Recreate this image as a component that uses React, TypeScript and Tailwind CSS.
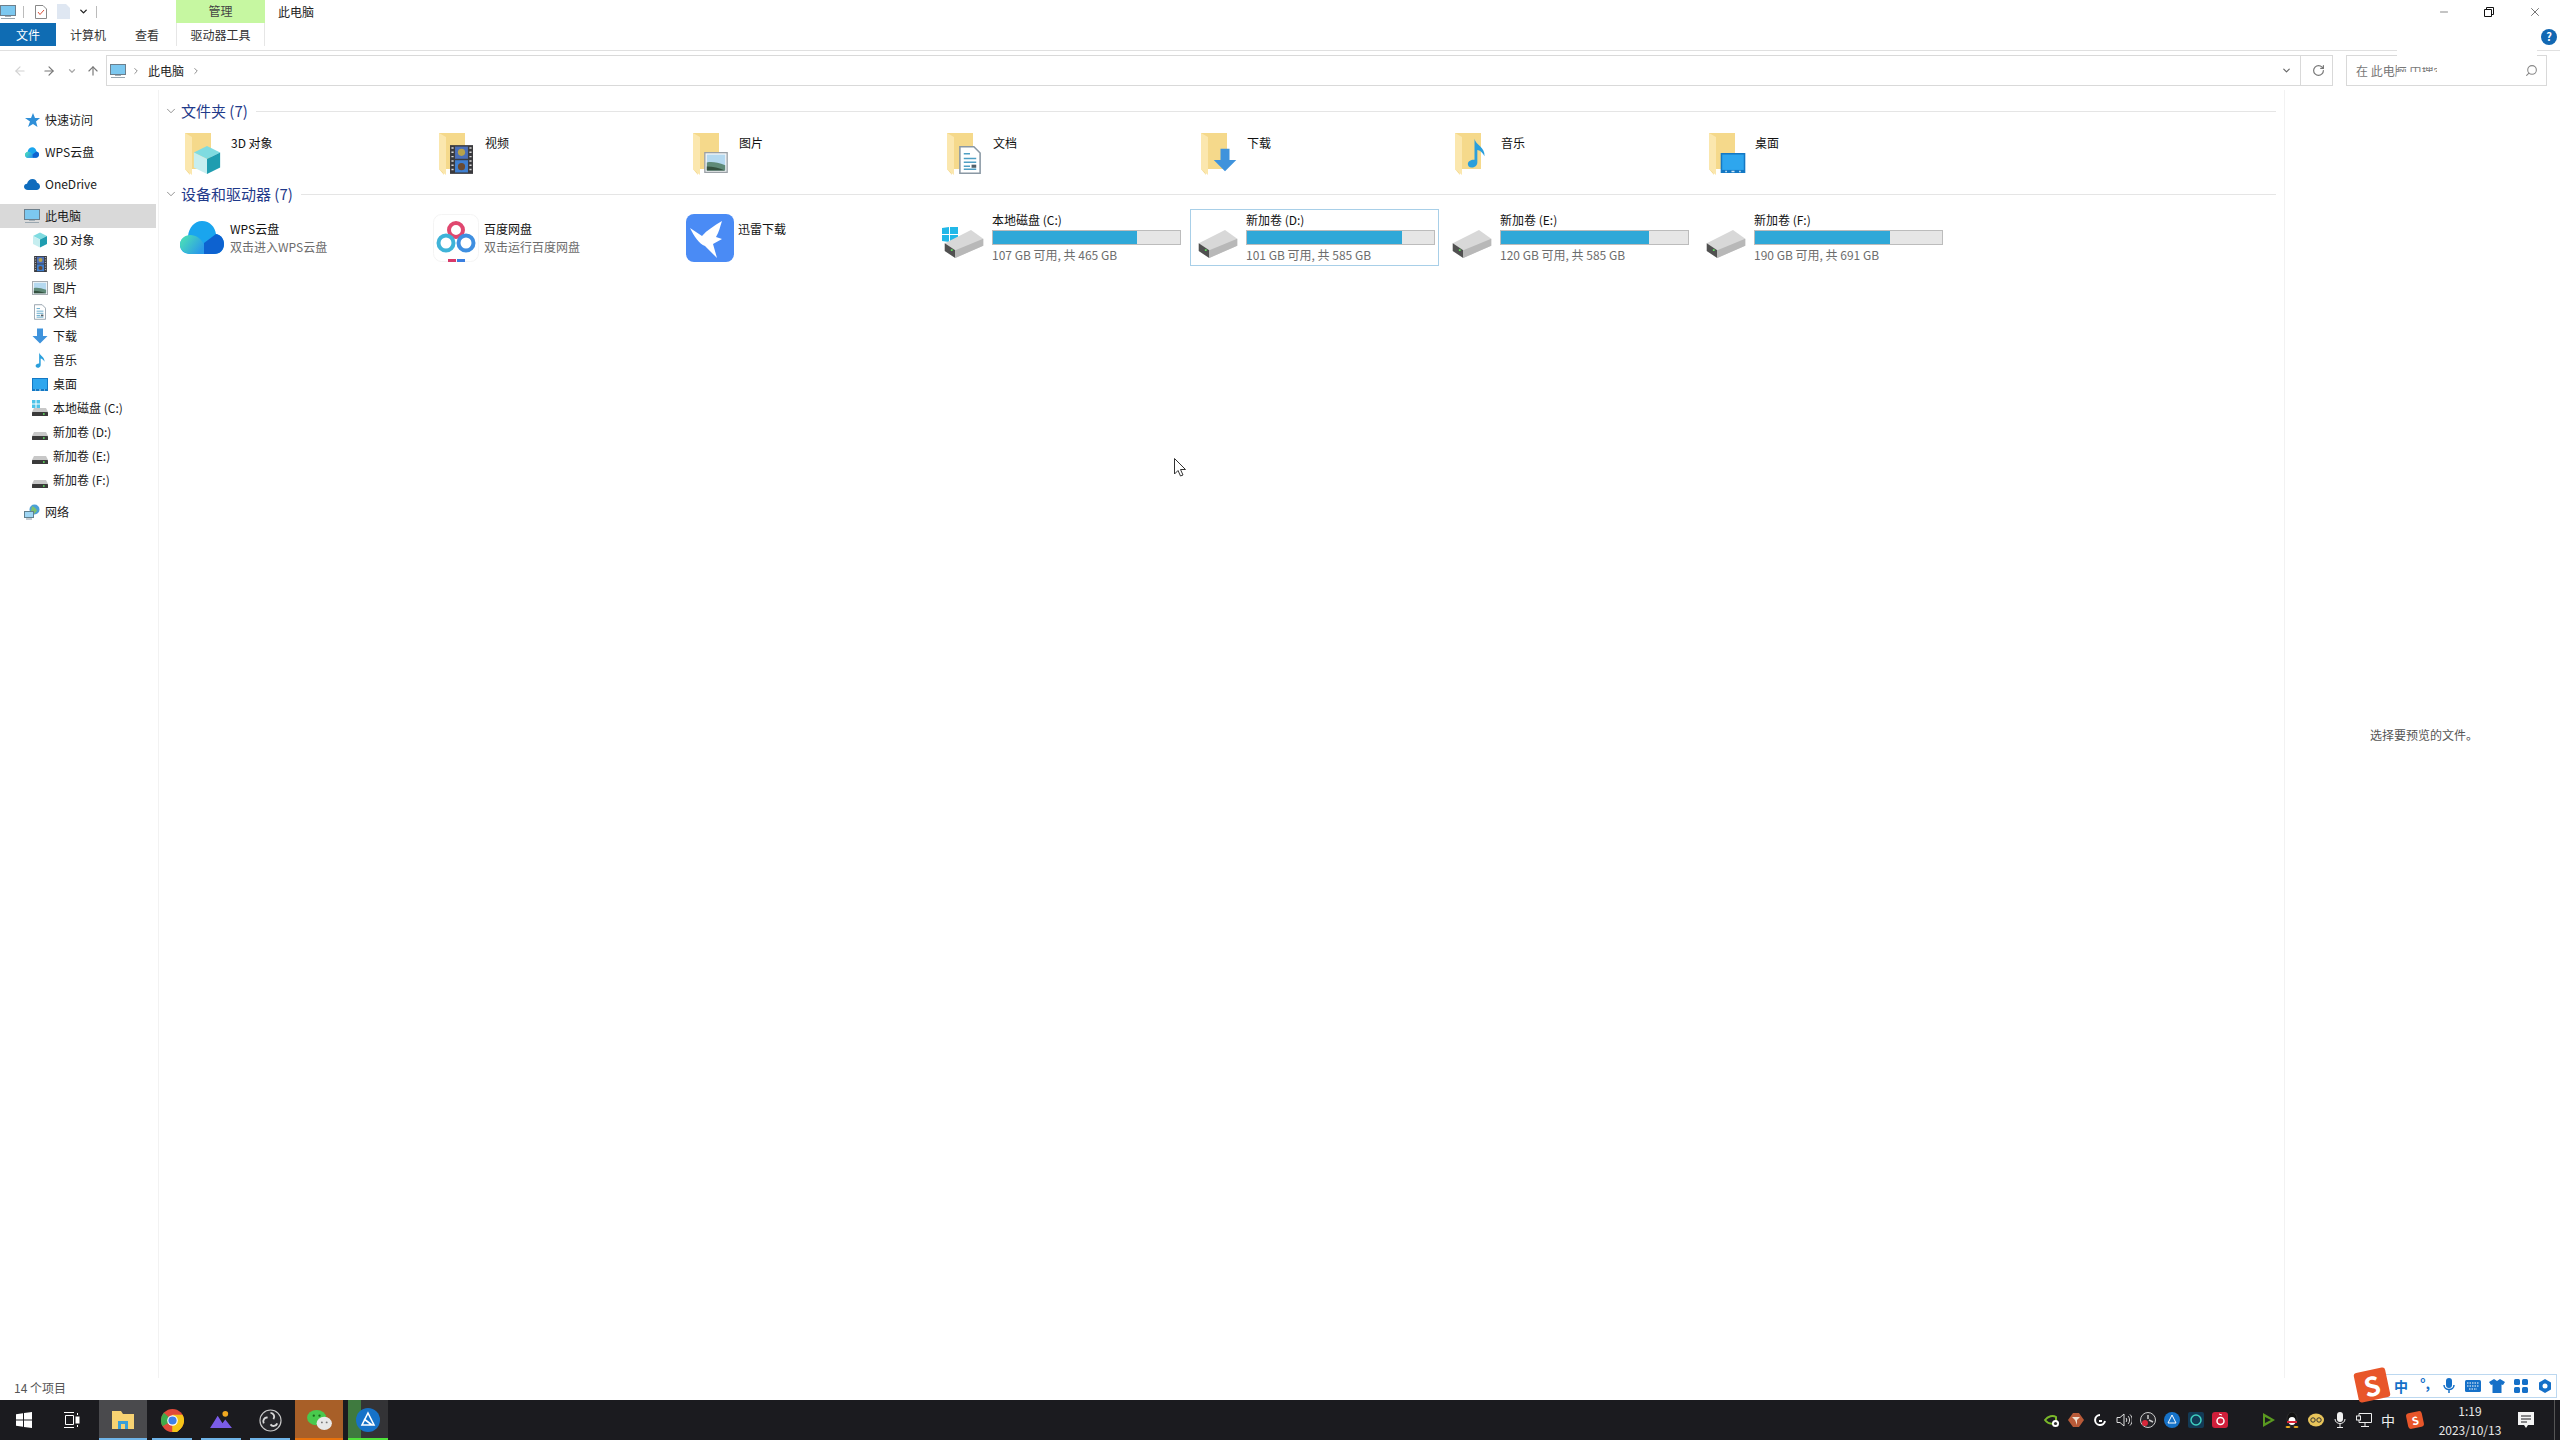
import type { ReactNode } from "react";
import { ArrowLeft, ArrowRight, ArrowUp, ChevronDown, ChevronRight, Minus, RotateCw, Search, X } from "lucide-react";

const FONT = "font-['Noto_Sans_CJK_SC','Noto_Sans',sans-serif]";

function Desktop({ className = "" }: { className?: string }) {
  return (
    <svg viewBox="0 0 16 16" className={className}>
      <rect x="0.5" y="1.5" width="15" height="10" fill="#8fd3f4" stroke="#6d7f8c" />
      <rect x="1" y="2" width="14" height="9" fill="#7cc8f0" />
      <rect x="5" y="12" width="6" height="1" fill="#a4b0b8" />
      <rect x="1" y="14" width="14" height="1" fill="#9aa7b0" />
    </svg>
  );
}

function Cube({ className = "" }: { className?: string }) {
  return (
    <svg viewBox="0 0 16 16" className={className}>
      <path d="M8 0.5 15 4 8 7.5 1 4Z" fill="#7fdbe0" />
      <path d="M1 4 8 7.5V15.5L1 12Z" fill="#c6eef0" />
      <path d="M15 4 8 7.5V15.5L15 12Z" fill="#1f9db0" />
    </svg>
  );
}

function Film({ className = "" }: { className?: string }) {
  return (
    <svg viewBox="0 0 16 20" className={className}>
      <rect width="16" height="20" fill="#3a3a3e" />
      <rect x="3.5" y="1" width="9" height="8.5" fill="#4b6fb8" />
      <rect x="3.5" y="10.5" width="9" height="8.5" fill="#3f7fd0" />
      <circle cx="8" cy="5" r="2.5" fill="#b8a24a" />
      <circle cx="8" cy="15" r="2.5" fill="#6a4a30" />
      <path d="M1 2h1.5M1 5h1.5M1 8h1.5M1 11h1.5M1 14h1.5M1 17h1.5M13.5 2H15M13.5 5H15M13.5 8H15M13.5 11H15M13.5 14H15M13.5 17H15" stroke="#d8d8d8" />
    </svg>
  );
}

function Picture({ className = "" }: { className?: string }) {
  return (
    <svg viewBox="0 0 18 16" className={className}>
      <rect x="0.5" y="0.5" width="17" height="15" fill="#f4f6f8" stroke="#9aa0a6" />
      <rect x="2" y="2" width="14" height="12" fill="#b5d9f0" />
      <path d="M2 8c4-1 8 0 14 2v4H2Z" fill="#5f8a78" />
      <path d="M2 11c5 0 9 1 14 3H2Z" fill="#34503f" />
    </svg>
  );
}

function Doc({ className = "" }: { className?: string }) {
  return (
    <svg viewBox="0 0 14 18" className={className}>
      <path d="M0.5 0.5H9.5L13.5 4.5V17.5H0.5Z" fill="#fff" stroke="#8a98a4" />
      <path d="M3 5H7M3 8H11M3 10.5H11M3 13H7M3 15H11" stroke="#4f9fc4" />
      <rect x="8" y="12" width="3" height="2" fill="#50606a" />
    </svg>
  );
}

function Download({ className = "" }: { className?: string }) {
  return (
    <svg viewBox="0 0 16 16" className={className}>
      <path d="M5 0.5H11V8H15.5L8 15.5 0.5 8H5Z" fill="#3f93dc" />
    </svg>
  );
}

function Note({ className = "" }: { className?: string }) {
  return (
    <svg viewBox="0 0 12 18" className={className}>
      <path d="M4.5 0.5C5 4 11 5.5 10.5 11 9.5 8.5 7.5 7.5 6.2 7.2V14.5C6.2 16.5 4.5 17.7 2.8 17.7 1.3 17.7 0.5 16.7 0.5 15.6 0.5 13.9 2.5 12.8 4.5 13Z" fill="#2a9fdc" />
    </svg>
  );
}

function DesktopBlue({ className = "" }: { className?: string }) {
  return (
    <svg viewBox="0 0 16 13" className={className}>
      <rect width="16" height="13" fill="#1378c4" />
      <rect x="1" y="1" width="14" height="10" fill="#2ea6ee" />
      <path d="M3 12h1M7 12h2M12 12h1" stroke="#cfe8f8" />
    </svg>
  );
}

function SmallDrive({ win = false }: { win?: boolean }) {
  return (
    <span className="relative block w-4 h-4 shrink-0">
      {win && (
        <svg viewBox="0 0 8 8" className="absolute left-0 top-0 w-[8px] h-[8px]">
          <path d="M0 0h3.5v3.5H0ZM4.5 0H8v3.5H4.5ZM0 4.5h3.5V8H0ZM4.5 4.5H8V8H4.5Z" fill="#4fc3e8" />
        </svg>
      )}
      <svg viewBox="0 0 16 8" className="absolute left-0 bottom-0 w-4 h-2">
        <path d="M2 0H14L16 4H0Z" fill="#c8c8c8" />
        <rect y="4" width="16" height="4" rx="0.5" fill="#3a3a3a" />
        <rect x="11" y="5.2" width="1.6" height="1.6" fill="#5ee05e" />
      </svg>
    </span>
  );
}

function Network() {
  return (
    <svg viewBox="0 0 16 16" className="w-4 h-4 shrink-0">
      <circle cx="10.5" cy="5.5" r="5" fill="#4a9fd8" />
      <path d="M8 2c2 1 4 2 5 5l-3 3-3-3Z" fill="#7dc06e" />
      <rect x="0.5" y="7.5" width="9" height="6" fill="#9fd6f4" stroke="#60808f" />
      <rect x="2" y="14.5" width="6" height="1" fill="#8a98a4" />
    </svg>
  );
}

function OneDriveIcon() {
  return (
    <svg viewBox="0 0 16 11" className="w-4 h-[11px] shrink-0">
      <path d="M4 11C1.5 11 0 9.5 0 7.8 0 6 1.5 4.8 3 4.8 3.8 2 6 0 8.5 0 11 0 12.6 1.5 13 3.8 14.8 4.2 16 5.6 16 7.5 16 9.5 14.5 11 12.5 11Z" fill="#0f6cbd" />
    </svg>
  );
}

function WpsCloud({ className = "" }: { className?: string }) {
  return (
    <svg viewBox="0 0 44 33" className={className}>
      <defs>
        <linearGradient id="wa" x1="0" y1="0" x2="1" y2="0.6">
          <stop offset="0" stopColor="#4fe8b0" />
          <stop offset="1" stopColor="#2b9be8" />
        </linearGradient>
      </defs>
      <path d="M34 33H10C4 33 0 29 0 24 0 19 3.5 15.5 8 15 9 7 14 0 22 0 30 0 35 6 36 13 41 14 44 18 44 23 44 29 40 33 34 33Z" fill="#1aa5ee" />
      <path d="M12 33C5 33 0 29 0 24 0 18 5 14 10 14 16 14 22 18 24 24L24 33Z" fill="url(#wa)" />
      <path d="M24 33V22L36 13C41 14 44 18 44 23 44 29 40 33 34 33Z" fill="#0d62d0" />
    </svg>
  );
}

function Baidu({ className = "" }: { className?: string }) {
  return (
    <svg viewBox="0 0 46 48" className={className}>
      <rect x="0.5" y="0.5" width="45" height="47" rx="8" fill="#fff" stroke="#f4f4f4" />
      <circle cx="23" cy="16" r="7" fill="none" stroke="#e0476f" strokeWidth="4" />
      <circle cx="13" cy="29" r="7.5" fill="none" stroke="#3fb3d8" strokeWidth="4" />
      <circle cx="33" cy="29" r="7.5" fill="none" stroke="#3f8fe0" strokeWidth="4" />
      <rect x="15" y="45" width="8" height="3" fill="#d83a6a" />
      <rect x="24" y="45" width="8" height="3" fill="#3a7fe0" />
    </svg>
  );
}

function Xunlei({ className = "" }: { className?: string }) {
  return (
    <svg viewBox="0 0 48 48" className={className}>
      <rect width="48" height="48" rx="8" fill="#4a8bf5" />
      <path d="M4 14 16 22C21 16 28 12 36 7 34 13 33 18 30 23L36 25 27 30 31 44 19 32C13 30 8 22 4 14Z" fill="#fff" />
    </svg>
  );
}

function Folder({ children }: { children?: ReactNode }) {
  return (
    <span className="relative block w-[44px] h-[42px] shrink-0">
      <svg viewBox="0 0 26 42" className="absolute left-0 top-0 w-[26px] h-[42px]">
        <path d="M0 0H26V36L4 36 5 42 0 36Z" fill="#f5d98b" />
        <path d="M0 0 7 4V42L0 36Z" fill="#fbe7ae" />
      </svg>
      {children}
    </span>
  );
}

function BigDrive({ win = false }: { win?: boolean }) {
  return (
    <span className="relative block w-[44px] h-[44px] shrink-0">
      {win && (
        <svg viewBox="0 0 16 16" className="absolute left-0 top-[9px] w-4 h-4">
          <path d="M0 1 7 0V7H0ZM8 0 16 -1V7H8ZM0 8H7V15L0 14ZM8 8H16V16L8 15Z" fill="#22b8e8" />
        </svg>
      )}
      <svg viewBox="0 0 44 32" className="absolute left-0 bottom-[4px] w-[44px] h-[28px]">
        <path d="M0 15 30 0 44 10 44 18 12 32 0 24Z" fill="#d8d8d8" />
        <path d="M0 15 12 23V32L0 24Z" fill="#505050" />
        <path d="M12 23 44 10V18L12 32Z" fill="#b8b8b8" />
        <rect x="7" y="22" width="2" height="2" fill="#5ee05e" />
      </svg>
    </span>
  );
}

function Row({ icon, label, child = false, selected = false, gapTop = false }: { icon: ReactNode; label: string; child?: boolean; selected?: boolean; gapTop?: boolean }) {
  return (
    <div className={`flex h-6 items-center gap-[5px] text-[12px] text-[#1a1a1a] ${child ? "pl-8" : "pl-6"} ${selected ? "bg-[#d9d9d9]" : ""} ${gapTop ? "mt-2" : ""}`}>
      <span className="flex w-4 h-4 items-center justify-center shrink-0">{icon}</span>
      {label}
    </div>
  );
}

function Sidebar() {
  return (
    <aside className="w-[159px] shrink-0 border-r border-[#f2f2f2] pt-[18px] pr-[2px]">
      <Row label="快速访问" icon={<svg viewBox="0 0 16 16" className="w-4 h-4"><path d="M9 1 11 6 16 6 12 9.5 13.5 15 9 12 4 15 6 9.5 1 6 7 6Z" fill="#2f8fd8" /></svg>} />
      <Row gapTop label="WPS云盘" icon={<WpsCloud className="w-[14px] h-[11px]" />} />
      <Row gapTop label="OneDrive" icon={<OneDriveIcon />} />
      <Row gapTop selected label="此电脑" icon={<Desktop className="w-4 h-4" />} />
      <Row child label="3D 对象" icon={<Cube className="w-4 h-4" />} />
      <Row child label="视频" icon={<Film className="w-[13px] h-4" />} />
      <Row child label="图片" icon={<Picture className="w-4 h-[14px]" />} />
      <Row child label="文档" icon={<Doc className="w-3 h-4" />} />
      <Row child label="下载" icon={<Download className="w-4 h-4" />} />
      <Row child label="音乐" icon={<Note className="w-[11px] h-4" />} />
      <Row child label="桌面" icon={<DesktopBlue className="w-4 h-[13px]" />} />
      <Row child label="本地磁盘 (C:)" icon={<SmallDrive win />} />
      <Row child label="新加卷 (D:)" icon={<SmallDrive />} />
      <Row child label="新加卷 (E:)" icon={<SmallDrive />} />
      <Row child label="新加卷 (F:)" icon={<SmallDrive />} />
      <Row gapTop label="网络" icon={<Network />} />
    </aside>
  );
}

function GroupHeading({ title }: { title: string }) {
  return (
    <div className="flex h-5 items-center pl-[5px]">
      <ChevronDown size={14} strokeWidth={1.2} className="text-[#666] shrink-0" />
      <span className="ml-[3px] text-[15px] text-[#1f3a8a] whitespace-nowrap">{title}</span>
      <span className="ml-2 flex-1 h-px bg-[#e5e5e5]" />
    </div>
  );
}

function FolderTile({ label, children }: { label: string; children: ReactNode }) {
  return (
    <div className="flex w-[249px] h-[46px] pl-[11px] pt-[2px] text-[12px] text-[#111]">
      <Folder>{children}</Folder>
      <span className="ml-[2px] pt-[1px] leading-[18px]">{label}</span>
    </div>
  );
}

function AppTile({ icon, name, sub }: { icon: ReactNode; name: string; sub?: string }) {
  return (
    <div className="flex w-[249px] h-[57px] items-center pl-[4px]">
      <span className="flex w-[48px] justify-center shrink-0">{icon}</span>
      <div className="ml-[4px] self-start pt-[11px] flex flex-col text-[12px] leading-[18px]">
        <span className="text-[#111]">{name}</span>
        {sub && <span className="text-[#6d6d6d]">{sub}</span>}
      </div>
    </div>
  );
}

function DriveTile({ name, usage, pct, win = false, active = false }: { name: string; usage: string; pct: number; win?: boolean; active?: boolean }) {
  return (
    <div className={`flex w-[249px] h-[57px] pl-[5px] border ${active ? "border-[#a8cfe8]" : "border-transparent"}`}>
      <span className="mt-[8px]"><BigDrive win={win} /></span>
      <div className="ml-[6px] w-[189px] flex flex-col text-[12px]">
        <span className="h-[20px] leading-[20px] text-[#111]">{name}</span>
        <div className="h-[15px] bg-[#e6e6e6] border border-[#bcbcbc]">
          {/* bar width comes from the drive's data */}
          <div className="h-full bg-[#2fa8d8]" style={{ width: `${pct}%` }} />
        </div>
        <span className="h-[20px] leading-[20px] text-[#6d6d6d]">{usage}</span>
      </div>
    </div>
  );
}

function TaskButton({ children, bg = "", line = "bg-[#6fb4e8]", full = false }: { children: ReactNode; bg?: string; line?: string; full?: boolean }) {
  return (
    <div className={`relative flex w-[48px] h-full items-center justify-center shrink-0 ${bg}`}>
      {children}
      <span className={`absolute bottom-0 h-[2px] ${full ? "inset-x-0" : "left-[4px] right-[4px]"} ${line}`} />
    </div>
  );
}

function Tray({ children, w = "w-[24px]" }: { children: ReactNode; w?: string }) {
  return <span className={`flex h-full items-center justify-center shrink-0 ${w}`}>{children}</span>;
}

function ImeSlot({ children }: { children: ReactNode }) {
  return <span className="flex w-[24px] h-full items-center justify-center shrink-0">{children}</span>;
}

function SogouMark({ size }: { size: string }) {
  return (
    <span className={`flex items-center justify-center rounded-[3px] -rotate-12 bg-[#e8562a] font-bold leading-none text-white ${size}`}>S</span>
  );
}

export default function App() {
  return (
    <div className={`relative flex flex-col w-[2560px] h-[1440px] overflow-hidden bg-white ${FONT}`}>
      {/* Title bar */}
      <div className="flex h-[23px] items-center shrink-0">
        <Desktop className="w-4 h-4 ml-0" />
        <span className="ml-[7px] w-px h-[12px] bg-[#bbb]" />
        <svg viewBox="0 0 12 14" className="ml-[11px] w-3 h-[14px]">
          <path d="M0.5 0.5H8L11.5 4V13.5H0.5Z" fill="#fff" stroke="#888" />
          <path d="M3 7 5 9.5 9 5" fill="none" stroke="#d9503a" />
        </svg>
        <svg viewBox="0 0 13 15" className="ml-[10px] w-[13px] h-[15px]">
          <path d="M0 0H9L13 4V15H0Z" fill="#dfe7f2" />
        </svg>
        <ChevronDown size={11} strokeWidth={3} className="ml-[8px] text-[#222]" />
        <span className="ml-[7px] w-px h-[12px] bg-[#bbb]" />
        <div className="ml-[79px] flex h-full w-[89px] items-center justify-center bg-[#c6f7a1] pb-[2px] text-[12px] text-[#444]">管理</div>
        <span className="ml-[13px] text-[12px] text-[#222]">此电脑</span>
        <div className="ml-auto flex items-center pr-[2px]">
          <Minus size={12} strokeWidth={1} className="text-[#111] mr-[34px]" />
          <svg viewBox="0 0 10 10" className="w-[10px] h-[10px] mr-[34px]">
            <path d="M0.5 2.5H7.5V9.5H0.5ZM2.5 2.5V0.5H9.5V7.5H7.5" fill="none" stroke="#111" />
          </svg>
          <X size={14} strokeWidth={1} className="text-[#111] mr-[16px]" />
        </div>
      </div>

      {/* Ribbon tabs */}
      <div className="flex h-[23px] items-center shrink-0 text-[12px] text-[#333]">
        <div className="flex h-full w-[56px] items-center justify-center bg-[#0f6cb3] text-white">文件</div>
        <span className="ml-[14px]">计算机</span>
        <span className="ml-[29px]">查看</span>
        <div className="ml-[17px] flex h-full w-[89px] items-center justify-center border-x border-[#e6e6e6]">驱动器工具</div>
        <svg viewBox="0 0 16 16" className="ml-auto mr-[3px] mt-[4px] w-4 h-4">
          <circle cx="8" cy="8" r="8" fill="#1268b3" />
          <text x="8" y="12" textAnchor="middle" fontSize="11" fontWeight="700" fill="#fff">?</text>
        </svg>
      </div>

      {/* Address row */}
      <div className="flex h-[40px] items-end shrink-0 border-t border-[#e0e0e0] mt-[4px] pb-[4px]">
        <div className="flex w-[106px] h-[31px] items-center pl-[13px] text-[#888] shrink-0">
          <ArrowLeft size={14} className="text-[#d2d2d2]" />
          <ArrowRight size={14} className="ml-[15px] text-[#777]" />
          <ChevronDown size={10} strokeWidth={3} className="ml-[11px] text-[#aaa]" />
          <ArrowUp size={14} className="ml-[9px] text-[#777]" />
        </div>
        <div className="flex flex-1 h-[31px] items-center border border-[#d9d9d9] text-[12px] text-[#222]">
          <Desktop className="w-4 h-4 ml-[3px]" />
          <ChevronRight size={10} strokeWidth={2} className="ml-[5px] text-[#777]" />
          <span className="ml-[7px]">此电脑</span>
          <ChevronRight size={10} strokeWidth={2} className="ml-[7px] text-[#777]" />
          <span className="ml-auto flex h-full w-[28px] items-center justify-center border-r border-[#d9d9d9]">
            <ChevronDown size={11} strokeWidth={2.5} className="text-[#666]" />
          </span>
          <span className="flex w-[31px] items-center justify-center pl-[3px]">
            <RotateCw size={13} strokeWidth={2.2} className="text-[#777]" />
          </span>
        </div>
        <div className="ml-[13px] mr-[13px] flex w-[201px] h-[31px] items-center border border-[#d9d9d9] pl-[9px] text-[12px] text-[#777] shrink-0">
          在 此电脑 中搜索
          <Search size={13} className="ml-auto mr-[8px] -scale-x-100 text-[#888]" />
        </div>
      </div>

      {/* Body */}
      <div className="flex flex-1 min-h-0">
        <Sidebar />
        <main className="flex-1 min-w-0 pt-[11px] pr-[8px]">
          <GroupHeading title="文件夹 (7)" />
          <div className="flex gap-[5px] pl-[15px] mt-[10px]">
            <FolderTile label="3D 对象"><Cube className="absolute left-[7px] bottom-0 w-[30px] h-[30px]" /></FolderTile>
            <FolderTile label="视频"><Film className="absolute left-[11px] bottom-[1px] w-[23px] h-[29px]" /></FolderTile>
            <FolderTile label="图片"><Picture className="absolute left-[9px] bottom-[2px] w-[28px] h-[21px]" /></FolderTile>
            <FolderTile label="文档"><Doc className="absolute left-[12px] bottom-[1px] w-[22px] h-[28px]" /></FolderTile>
            <FolderTile label="下载"><Download className="absolute left-[12px] bottom-[1px] w-[24px] h-[28px]" /></FolderTile>
            <FolderTile label="音乐"><Note className="absolute left-[12px] top-0 w-[20px] h-[40px]" /></FolderTile>
            <FolderTile label="桌面"><DesktopBlue className="absolute left-[10px] bottom-[2px] w-[28px] h-[20px]" /></FolderTile>
          </div>
          <div className="mt-[7px]"><GroupHeading title="设备和驱动器 (7)" /></div>
          <div className="flex gap-[5px] pl-[15px] mt-[5px]">
            <AppTile icon={<WpsCloud className="w-[44px] h-[33px]" />} name="WPS云盘" sub="双击进入WPS云盘" />
            <AppTile icon={<Baidu className="w-[46px] h-[48px]" />} name="百度网盘" sub="双击运行百度网盘" />
            <AppTile icon={<Xunlei className="w-[48px] h-[48px]" />} name="迅雷下载" />
            <DriveTile win name="本地磁盘 (C:)" usage="107 GB 可用, 共 465 GB" pct={77} />
            <DriveTile active name="新加卷 (D:)" usage="101 GB 可用, 共 585 GB" pct={83} />
            <DriveTile name="新加卷 (E:)" usage="120 GB 可用, 共 585 GB" pct={79} />
            <DriveTile name="新加卷 (F:)" usage="190 GB 可用, 共 691 GB" pct={72} />
          </div>
        </main>
        <aside className="w-[276px] shrink-0 border-l border-[#f2f2f2] pt-[636px] pl-[85px] text-[12px] text-[#555]">
          选择要预览的文件。
        </aside>
      </div>

      {/* Status bar */}
      <div className="flex h-[22px] items-center pl-[14px] pb-[2px] shrink-0 text-[12px] text-[#555]">14 个项目</div>

      {/* Taskbar */}
      <footer className="flex h-[40px] items-center bg-[#1b1b1f] shrink-0 text-white">
        <Tray w="w-[48px]">
          <svg viewBox="0 0 16 16" className="w-4 h-4">
            <path d="M0 2.2 7 1.2V7.5H0ZM8 1 16 0V7.5H8ZM0 8.5H7V14.8L0 13.8ZM8 8.5H16V16L8 15Z" fill="#fff" />
          </svg>
        </Tray>
        <Tray w="w-[51px]">
          <svg viewBox="0 0 16 16" className="w-4 h-4 -ml-[3px]" fill="none" stroke="#fff">
            <path d="M0 0.5H10M0 15.5H10M1.5 3.5H9.5V12.5H1.5ZM13.5 1V3M13.5 13V15" />
            <rect x="12" y="5" width="3" height="6" fill="#fff" />
          </svg>
        </Tray>
        <TaskButton full bg="bg-[#4a4a4d]">
          <svg viewBox="0 0 22 18" className="w-[22px] h-[18px]">
            <path d="M0 0H9L11 3H22V18H0Z" fill="#f7d272" />
            <rect x="6" y="10" width="10" height="8" fill="#3a9fd8" />
            <rect x="9" y="13" width="4" height="5" fill="#f7d272" />
          </svg>
        </TaskButton>
        <span className="w-[1px]" />
        <TaskButton>
          <svg viewBox="0 0 24 24" className="w-[23px] h-[23px]">
            <circle cx="12" cy="12" r="12" fill="#e04a3a" />
            <path d="M12 12 1.6 18A12 12 0 0 1 3 4Z" fill="#3faa4a" />
            <path d="M12 12V24A12 12 0 0 0 22.4 6H12Z" fill="#f5c518" />
            <path d="M12 12 22.4 18 17 24H12Z" fill="#f5c518" />
            <circle cx="12" cy="12" r="5.5" fill="#fff" />
            <circle cx="12" cy="12" r="4.3" fill="#3f80e8" />
          </svg>
        </TaskButton>
        <span className="w-[1px]" />
        <TaskButton>
          <svg viewBox="0 0 24 20" className="w-[23px] h-[19px]">
            <circle cx="16" cy="3" r="3" fill="#f0a820" />
            <path d="M0 18 8 5 13 13 16 9 23 18Z" fill="#7a5ce8" />
          </svg>
        </TaskButton>
        <span className="w-[1px]" />
        <TaskButton>
          <svg viewBox="0 0 24 24" className="w-[23px] h-[23px]">
            <circle cx="12" cy="12" r="11" fill="#26262a" stroke="#c8c8c8" strokeWidth="1.2" />
            <path d="M12 4a4 4 0 0 1 3 6.5M19 15a4 4 0 0 1-7 1M5 15a4 4 0 0 1 4-6" fill="none" stroke="#d8d8d8" strokeWidth="2" />
          </svg>
        </TaskButton>
        <span className="w-[1px]" />
        <TaskButton full bg="bg-[#a85f28]" line="bg-[#e8720c]">
          <svg viewBox="0 0 26 22" className="w-[25px] h-[21px]">
            <ellipse cx="10" cy="8" rx="10" ry="8" fill="#49c94d" />
            <ellipse cx="18" cy="14" rx="8" ry="7" fill="#e8e8e8" />
            <circle cx="7" cy="6" r="1.2" fill="#1a6a1a" />
            <circle cx="13" cy="6" r="1.2" fill="#1a6a1a" />
            <circle cx="15.5" cy="13" r="1" fill="#777" />
            <circle cx="20.5" cy="13" r="1" fill="#777" />
          </svg>
        </TaskButton>
        <span className="w-[1px]" />
        <div className="relative flex w-[40px] h-full items-center justify-center shrink-0 ml-[4px] bg-gradient-to-r from-[#3f7a3f] from-[32%] to-[#333336] to-[32%]">
          <svg viewBox="0 0 24 24" className="w-[24px] h-[24px]">
            <circle cx="12" cy="12" r="12" fill="#1672c8" />
            <path d="M12 5 18 17H6ZM8 11 16 17" fill="none" stroke="#fff" strokeWidth="1.6" />
          </svg>
          <span className="absolute inset-x-0 bottom-0 h-[2px] bg-[#4fe33a]" />
        </div>

        {/* Tray */}
        <div className="ml-auto flex h-full items-center">
          <Tray><svg viewBox="0 0 16 16" className="w-4 h-4"><path d="M1 8c3-4 8-5 11-3v5c-2 2-7 3-11-2Z" fill="none" stroke="#7ab82a" strokeWidth="2" /><circle cx="11.5" cy="11.5" r="3.5" fill="#fff" /><circle cx="11.5" cy="11.5" r="1.6" fill="#333" /></svg></Tray>
          <Tray><svg viewBox="0 0 16 16" className="w-4 h-4"><path d="M5 1H11L16 8 11 15H5L0 8Z" fill="#b85a38" /><path d="M4 5H12L9 8V13L7 8Z" fill="#f0e0d0" /></svg></Tray>
          <Tray><svg viewBox="0 0 12 12" className="w-3 h-3"><path d="M6 1A5 5 0 1 0 11 7M8 7H5" fill="none" stroke="#fff" strokeWidth="2" /></svg></Tray>
          <Tray><svg viewBox="0 0 16 16" className="w-4 h-4" fill="none" stroke="#ddd"><path d="M1 5.5H4L8 2V14L4 10.5H1ZM10 6c1 1 1 3 0 4M12 4c2 2 2 6 0 8M14 2.5c3 3 3 8 0 11" /></svg></Tray>
          <Tray><svg viewBox="0 0 16 16" className="w-4 h-4"><circle cx="8" cy="8" r="7.5" fill="#26262a" stroke="#ccc" /><circle cx="5" cy="11" r="3" fill="#d8273a" /><path d="M8 3v4M13 10 9 8" stroke="#ccc" strokeWidth="1.5" /></svg></Tray>
          <Tray><svg viewBox="0 0 16 16" className="w-4 h-4"><circle cx="8" cy="8" r="8" fill="#1672c8" /><path d="M8 3 12 11H4Z" fill="none" stroke="#fff" /></svg></Tray>
          <Tray><svg viewBox="0 0 16 16" className="w-4 h-4"><rect width="16" height="16" rx="2" fill="#123a55" /><circle cx="8" cy="8" r="5" fill="none" stroke="#3fd0c0" strokeWidth="1.5" /></svg></Tray>
          <Tray><svg viewBox="0 0 16 16" className="w-4 h-4"><rect width="16" height="16" rx="3" fill="#d01f3a" /><circle cx="8.5" cy="9" r="3.5" fill="none" stroke="#fff" strokeWidth="1.5" /><path d="M7 2 10 3" stroke="#fff" /></svg></Tray>
          <span className="w-[24px]" />
          <Tray><svg viewBox="0 0 14 14" className="w-[14px] h-[14px]"><path d="M2 0 14 7 2 14Z" fill="#5a9a20" /><path d="M4 4 10 7 4 10Z" fill="#1b1b1f" /></svg></Tray>
          <Tray><svg viewBox="0 0 14 16" className="w-[14px] h-4"><ellipse cx="7" cy="7" rx="5" ry="7" fill="#111" stroke="#444" strokeWidth="0.5" /><ellipse cx="7" cy="9" rx="3.5" ry="4" fill="#fff" /><path d="M2 9h10v2H2Z" fill="#d8273a" /><ellipse cx="3" cy="15" rx="2.5" ry="1" fill="#f0b020" /><ellipse cx="11" cy="15" rx="2.5" ry="1" fill="#f0b020" /></svg></Tray>
          <Tray><svg viewBox="0 0 16 14" className="w-4 h-[14px]"><ellipse cx="8" cy="7" rx="8" ry="6.5" fill="#e8c45a" /><circle cx="5" cy="7" r="2.2" fill="none" stroke="#333" /><circle cx="11" cy="7" r="2.2" fill="none" stroke="#333" /></svg></Tray>
          <Tray><svg viewBox="0 0 12 16" className="w-3 h-4"><rect x="3" y="0" width="6" height="10" rx="3" fill="#f0f0f0" /><path d="M1 7c0 6 10 6 10 0M6 12v3M3 15.5h6" fill="none" stroke="#f0f0f0" /></svg></Tray>
          <Tray><svg viewBox="0 0 16 14" className="w-4 h-[14px]" fill="none" stroke="#eee"><path d="M3 .5H15.500V9.500H3ZM9 9.500V13M5 13.500H13" /><rect x=".5" y="3" width="4" height="4" fill="#1b1b1f" /></svg></Tray>
          <Tray><span className="text-[14px] text-[#eee]">中</span></Tray>
          <span className="w-[3px]" />
          <Tray><SogouMark size="w-4 h-4 text-[11px]" /></Tray>
          <div className="ml-[5px] flex w-[76px] flex-col items-center text-[12px] leading-[19px] text-[#e8e8e8]">
            <span>1:19</span>
            <span>2023/10/13</span>
          </div>
          <svg viewBox="0 0 16 16" className="ml-[10px] w-4 h-4">
            <path d="M0 0H16V13H10L8 16 6 13H0Z" fill="#f4f4f4" />
            <path d="M3 4H13M3 7H13M3 10H9" stroke="#1b1b1f" />
          </svg>
          <span className="ml-[20px] mr-[5px] w-px h-full bg-[#555]" />
        </div>
      </footer>

      {/* Video artifact that wipes part of the search box */}
      <span className="absolute left-[2397px] top-[47px] w-[140px] h-[10px] bg-white" />
      <span className="absolute left-[2397px] top-[56px] w-[128px] h-[11px] bg-white" />
      <span className="absolute left-[2397px] top-[72px] w-[128px] h-[10px] bg-white" />
      <span className="absolute left-[2437px] top-[66px] w-[88px] h-[8px] bg-white" />

      {/* Sogou IME toolbar floats above the taskbar */}
      <div className="absolute left-[2384px] top-[1374px] flex w-[173px] h-[24px] items-center border border-[#bcd8f0] bg-white pl-[4px] text-[#1570c8]">
        <ImeSlot><span className="text-[14px] font-bold leading-none">中</span></ImeSlot>
        <ImeSlot><span className="text-[14px] font-bold leading-none -mt-[6px]">°,</span></ImeSlot>
        <ImeSlot><svg viewBox="0 0 12 16" className="w-3 h-4"><rect x="3" width="6" height="10" rx="3" fill="#1570c8" /><path d="M1 7c0 6 10 6 10 0M6 12v3" fill="none" stroke="#1570c8" strokeWidth="1.5" /></svg></ImeSlot>
        <ImeSlot><svg viewBox="0 0 16 12" className="w-4 h-3"><rect width="16" height="12" rx="1.5" fill="#1570c8" /><path d="M2 3h12M2 6h12M4 9h8" stroke="#fff" strokeDasharray="1.5 1" /></svg></ImeSlot>
        <ImeSlot><svg viewBox="0 0 16 14" className="w-4 h-[14px]"><path d="M5 0 8 2 11 0 16 3 14 6 12.5 5.500V14H3.500V5.500L2 6 0 3Z" fill="#1570c8" /></svg></ImeSlot>
        <ImeSlot><svg viewBox="0 0 14 14" className="w-[14px] h-[14px]"><rect width="6" height="6" rx="1.5" fill="#1570c8" /><rect x="8" width="6" height="6" rx="1.5" fill="#1570c8" /><rect y="8" width="6" height="6" rx="1.5" fill="#1570c8" /><rect x="8" y="8" width="6" height="6" rx="1.5" fill="#1570c8" /></svg></ImeSlot>
        <ImeSlot><svg viewBox="0 0 14 14" className="w-[14px] h-[14px]"><path d="M7 0 13 3.500V10.500L7 14 1 10.500V3.500Z" fill="#1570c8" /><circle cx="7" cy="7" r="2.5" fill="#fff" /></svg></ImeSlot>
      </div>
      <div className="absolute left-[2356px] top-[1370px]"><SogouMark size="w-8 h-[30px] text-[26px]" /></div>

      {/* Mouse pointer */}
      <svg viewBox="0 0 12 19" className="absolute left-[1174px] top-[458px] w-3 h-[19px]">
        <path d="M.5 .5V16L4 12.500 6.500 18 9 17 6.500 11.500H11.500Z" fill="#fff" stroke="#333" />
      </svg>
    </div>
  );
}
